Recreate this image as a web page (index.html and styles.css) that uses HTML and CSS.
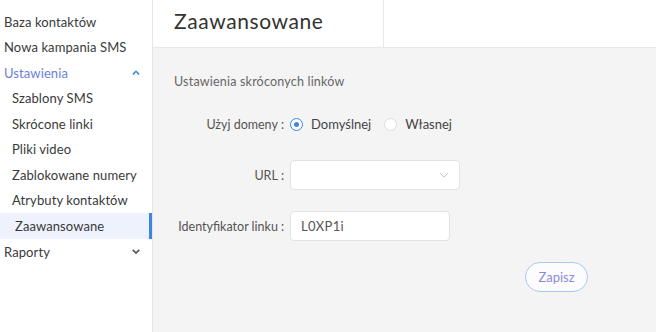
FILE: index.html
```html
<!DOCTYPE html>
<html lang="pl">
<head>
    <meta charset="UTF-8">
    <meta name="viewport" content="width=device-width, initial-scale=1.0">
    <title>Zaawansowane</title>
    <link rel="stylesheet" href="styles.css">
</head>
<body>
    <div class="layout">
        <nav class="sidebar">
            <a class="menu-item">Baza kontaktów</a>
            <a class="menu-item">Nowa kampania SMS</a>
            <a class="menu-item open">
                Ustawienia
                <svg class="caret up" viewBox="0 0 10 6"><path d="M1 5.5L5 1.5 9 5.5" /></svg>
            </a>
            <a class="menu-item sub">Szablony SMS</a>
            <a class="menu-item sub">Skrócone linki</a>
            <a class="menu-item sub">Pliki video</a>
            <a class="menu-item sub">Zablokowane numery</a>
            <a class="menu-item sub">Atrybuty kontaktów</a>
            <a class="menu-item sub active">Zaawansowane</a>
            <a class="menu-item">
                Raporty
                <svg class="caret" viewBox="0 0 10 6"><path d="M1 1L5 5 9 1" /></svg>
            </a>
        </nav>
        <main class="content">
            <header class="page-header">
                <h1 class="page-title">Zaawansowane</h1>
            </header>
            <section class="panel">
                <div class="section-title">Ustawienia skróconych linków</div>
                <form class="settings-form">
                    <div class="form-row">
                        <label class="form-label">Użyj domeny</label>
                        <div class="radio-group">
                            <span class="radio checked"><span class="radio-dot"></span>Domyślnej</span>
                            <span class="radio"><span class="radio-dot"></span>Własnej</span>
                        </div>
                    </div>
                    <div class="form-row">
                        <label class="form-label">URL</label>
                        <div class="select">
                            <svg class="select-arrow" viewBox="0 0 12 7"><path d="M1 1L6 6 11 1" /></svg>
                        </div>
                    </div>
                    <div class="form-row">
                        <label class="form-label">Identyfikator linku</label>
                        <div class="text-input">L0XP1i</div>
                    </div>
                    <div class="form-actions">
                        <button type="button" class="btn-save">Zapisz</button>
                    </div>
                </form>
            </section>
        </main>
    </div>
</body>
</html>
```

FILE: styles.css
```css
body {
    margin: 0;
    font-family: 'Lato', 'Open Sans', sans-serif;
    background: #f4f4f4;
    color: #333;
}
.layout {
    display: flex;
    height: 332px;
}
.sidebar {
    width: 152px;
    flex-shrink: 0;
    background: #fff;
    border-right: 1px solid #e6e6e6;
    padding-top: 9px;
}
.menu-item {
    display: flex;
    align-items: center;
    justify-content: space-between;
    height: 25.5px;
    padding: 0 12px 0 4px;
    font-size: 13px;
    letter-spacing: 0.1px;
    white-space: nowrap;
    color: #3a3a3a;
    cursor: pointer;
}
.menu-item.open {
    color: #6c7fe0;
}
.menu-item.sub {
    padding-left: 12px;
}
.menu-item.active {
    padding-left: 15px;
    background: #edf2fd;
    box-shadow: inset -3px 0 0 #3b86e4;
    height: 26px;
}
.caret {
    width: 8px;
    height: 5px;
    fill: none;
    stroke: #555;
    stroke-width: 2;
}
.caret.up {
    stroke: #3b86e4;
}
.content {
    flex: 1;
    display: flex;
    flex-direction: column;
}
.page-header {
    height: 47px;
    background: #fff;
    border-bottom: 1px solid #e6e8f0;
    display: flex;
}
.page-title {
    width: 209px;
    margin: 0;
    padding-left: 21px;
    border-right: 1px solid #e6eaf0;
    font-size: 21px;
    font-weight: 400;
    letter-spacing: 0.6px;
    line-height: 42px;
    color: #333;
}
.panel {
    padding: 26px 0 0 21px;
}
.section-title {
    font-size: 12.5px;
    letter-spacing: 0.2px;
    color: #666;
    margin-bottom: 20px;
}
.settings-form {
    width: 414px;
    display: flex;
    flex-direction: column;
    gap: 21px;
}
.form-row {
    display: flex;
    align-items: center;
    height: 30px;
    gap: 6px;
}
.form-label {
    width: 110px;
    white-space: nowrap;
    text-align: right;
    font-size: 12.5px;
    color: #555;
}
.form-label::after {
    content: ":";
    margin-left: 3px;
}
.radio-group {
    display: flex;
    gap: 13px;
}
.radio {
    display: flex;
    align-items: center;
    gap: 8px;
    font-size: 13px;
    color: #444;
}
.radio-dot {
    width: 11px;
    height: 11px;
    border: 1px solid #ddd;
    border-radius: 50%;
    background: #fff;
    display: flex;
    align-items: center;
    justify-content: center;
}
.radio.checked .radio-dot {
    border-color: #3b86e4;
}
.radio.checked .radio-dot::after {
    content: "";
    width: 5px;
    height: 5px;
    border-radius: 50%;
    background: #3b86e4;
}
.select,
.text-input {
    height: 28px;
    background: #fff;
    border: 1px solid #e2e2e2;
    border-radius: 4px;
}
.select {
    width: 168px;
    display: flex;
    align-items: center;
    justify-content: flex-end;
}
.select-arrow {
    width: 10px;
    height: 6px;
    margin-right: 10px;
    fill: none;
    stroke: #bbb;
    stroke-width: 1;
}
.text-input {
    width: 148px;
    padding-left: 10px;
    line-height: 28px;
    font-size: 13px;
    letter-spacing: 0.3px;
    color: #555;
}
.form-actions {
    display: flex;
    justify-content: flex-end;
}
.btn-save {
    width: 63px;
    height: 30px;
    background: #fcfcff;
    border: 1px solid #a9c8ef;
    border-radius: 15px;
    color: #8b8bdb;
    font-family: inherit;
    font-size: 13px;
    cursor: pointer;
}
```
